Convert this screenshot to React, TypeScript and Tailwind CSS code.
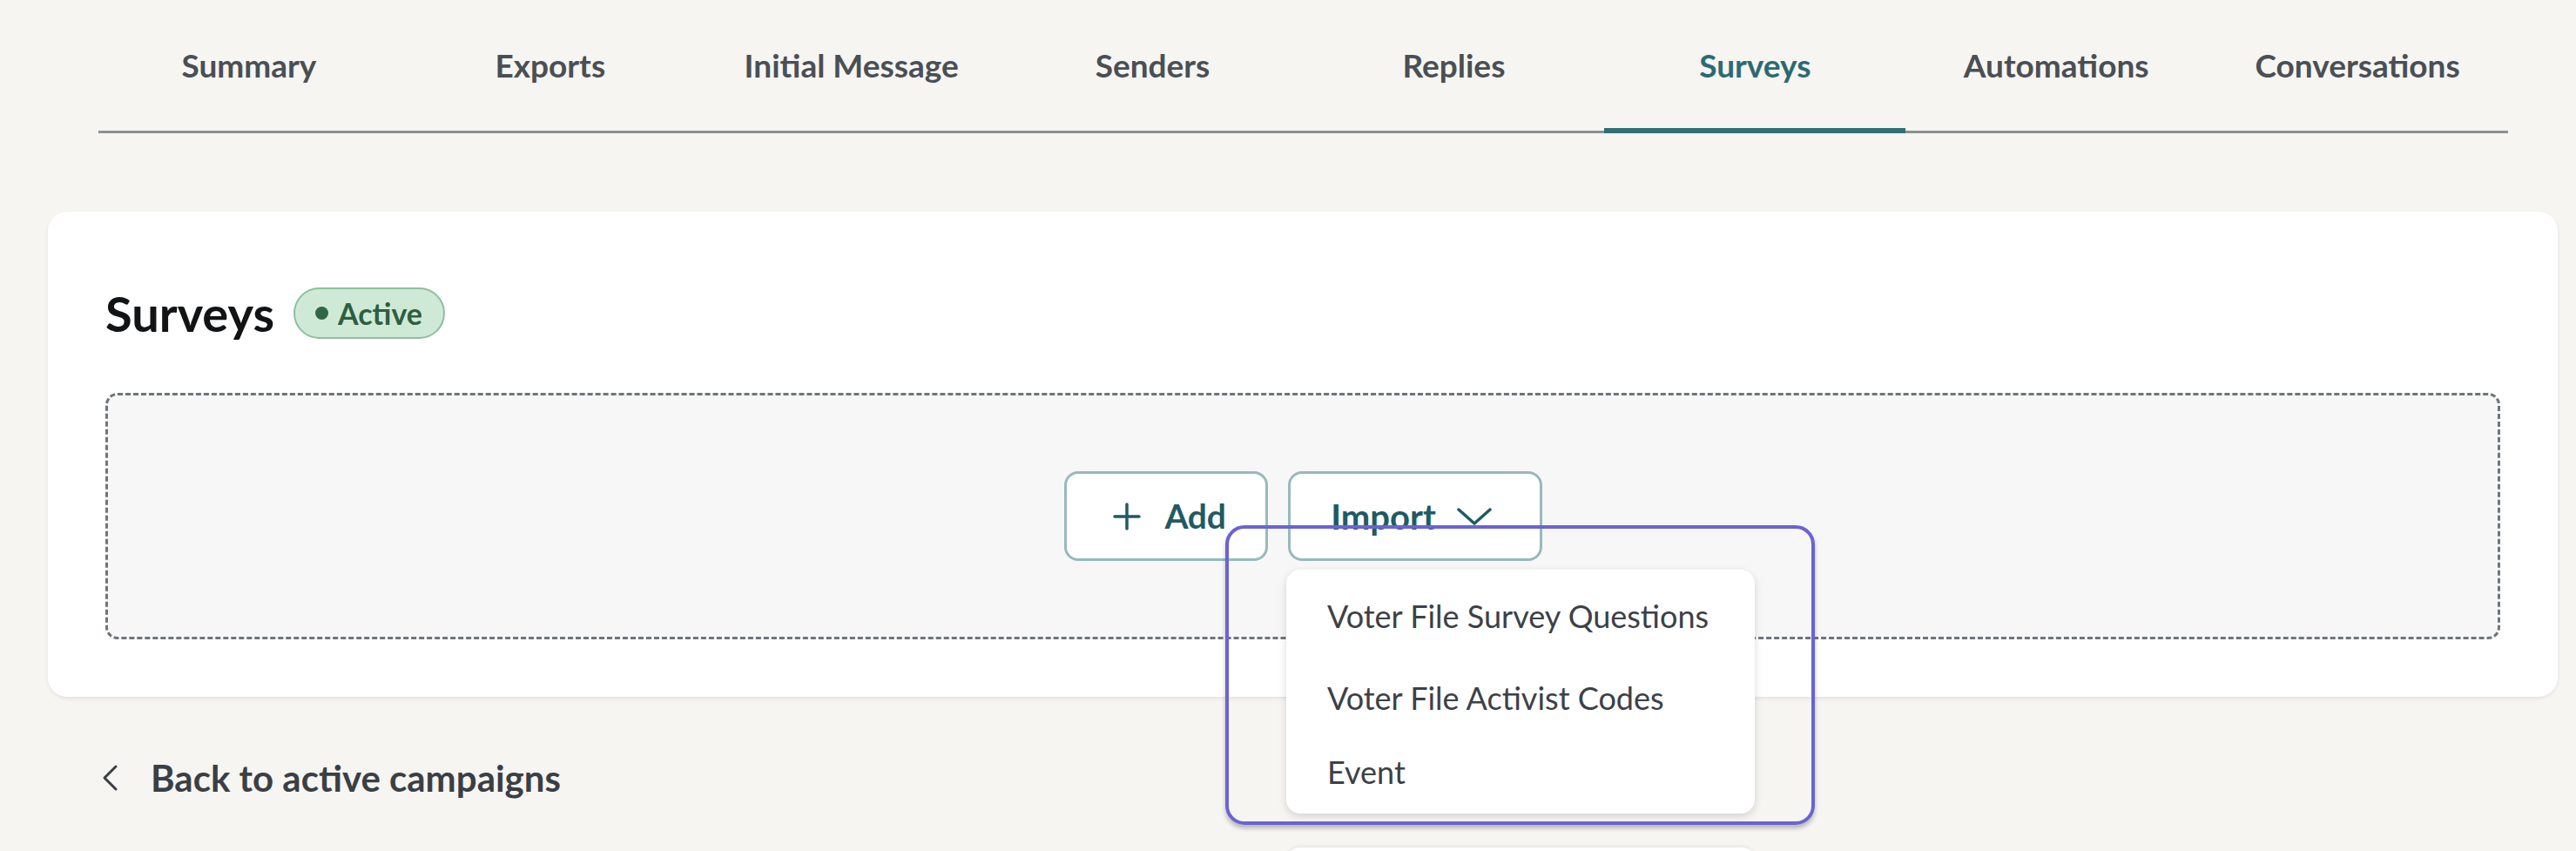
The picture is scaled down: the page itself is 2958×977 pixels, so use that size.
import React from "react";

const tabs = ["Summary", "Exports", "Initial Message", "Senders", "Replies", "Surveys", "Automations", "Conversations"];

export default function App() {
  return (
    <div
      className="relative w-[2958px] h-[977px] overflow-hidden bg-[#f6f5f2]"
      style={{ fontFamily: "Lato, 'Noto Sans', sans-serif" }}
    >
      {/* Tabs */}
      <div className="ml-[113px] w-[2767px] grid grid-cols-8 border-b-[3px] border-[#8b9094]">
        {tabs.map((t) => (
          <div key={t} className="relative h-[150px] flex items-center justify-center">
            <span
              className={
                "text-[37px] font-bold " +
                (t === "Surveys" ? "text-[#2b6a72]" : "text-[#4a4f55]")
              }
            >
              {t}
            </span>
            {t === "Surveys" && (
              <div className="absolute left-0 right-0 bottom-[-3px] h-[6px] bg-[#2f6f76]" />
            )}
          </div>
        ))}
      </div>

      {/* Card */}
      <div className="mt-[90px] ml-[55px] w-[2882px] bg-white rounded-[22px] shadow-[0_2px_4px_rgba(0,0,0,0.08)] pt-[87px] px-[66px] pb-[66px]">
        <div className="flex items-center h-[59px] gap-[22px]">
          <h1 className="text-[56px] font-bold text-[#111315] leading-none">Surveys</h1>
          <div className="h-[59px] w-[174px] rounded-full bg-[#cfe9d7] border-2 border-[#8dbf9d] flex items-center pl-[23px] gap-[11px]">
            <span className="w-[15px] h-[15px] rounded-full bg-[#2e6844]" />
            <span className="text-[34px] font-bold text-[#2c5f3f] leading-none">Active</span>
          </div>
        </div>
        <div className="mt-[62px] h-[283px] rounded-[14px] border-[3px] border-dashed border-[#6f757a] bg-[#f7f7f7] flex items-center justify-center gap-[23px]">
          <button className="w-[234px] h-[103px] bg-white border-[3px] border-[#98b9bc] rounded-[16px] flex items-center justify-center gap-[26px] pl-[8px] text-[#1f5b63]">
            <svg width="34" height="34" viewBox="0 0 34 34" fill="none" stroke="#1f5b63" strokeWidth="3.5" strokeLinecap="round">
              <path d="M17 3v28M3 17h28" />
            </svg>
            <span className="text-[39px] font-bold tracking-[-0.3px]">Add</span>
          </button>
          <button className="w-[292px] h-[103px] bg-white border-[3px] border-[#98b9bc] rounded-[16px] flex items-center justify-center gap-[24px] pr-[8px] text-[#1f5b63]">
            <span className="text-[40px] font-bold">Import</span>
            <svg width="40" height="22" viewBox="0 0 40 22" fill="none" stroke="#1f5b63" strokeWidth="3.5" strokeLinecap="round" strokeLinejoin="round">
              <path d="M2 3l18 16L38 3" />
            </svg>
          </button>
        </div>
      </div>

      {/* Back link */}
      <div className="mt-[63px] ml-[115px] h-[60px] flex items-center gap-[36px]">
        <svg width="22" height="32" viewBox="0 0 22 32" fill="none" stroke="#3a3f45" strokeWidth="3" strokeLinecap="round" strokeLinejoin="round">
          <path d="M18 3L5 16l13 13" />
        </svg>
        <span className="text-[42px] font-bold text-[#3a3f45]">Back to active campaigns</span>
      </div>

      {/* Dropdown menu */}
      <div className="absolute left-[1477px] top-[654px] w-[538px] h-[280px] bg-white rounded-[16px] shadow-[0_3px_10px_rgba(0,0,0,0.15)] pl-[47px] pt-[28px] text-[#3c4147]">
        <div className="h-[50px] flex items-center text-[36px]">Voter File Survey Questions</div>
        <div className="mt-[44px] h-[50px] flex items-center text-[36px]">Voter File Activist Codes</div>
        <div className="mt-[35px] h-[50px] flex items-center text-[36px]">Event</div>
      </div>

      {/* Highlight */}
      <div className="absolute left-[1407px] top-[603px] w-[677px] h-[344px] border-[4px] border-[#6b63d2] rounded-[22px] shadow-[0_4px_5px_rgba(0,0,0,0.25)]" />

      {/* Partial element at bottom */}
      <div className="absolute left-[1478px] top-[973px] w-[537px] h-[40px] bg-white rounded-t-[14px] shadow-[0_-1px_4px_rgba(0,0,0,0.08)]" />
    </div>
  );
}
